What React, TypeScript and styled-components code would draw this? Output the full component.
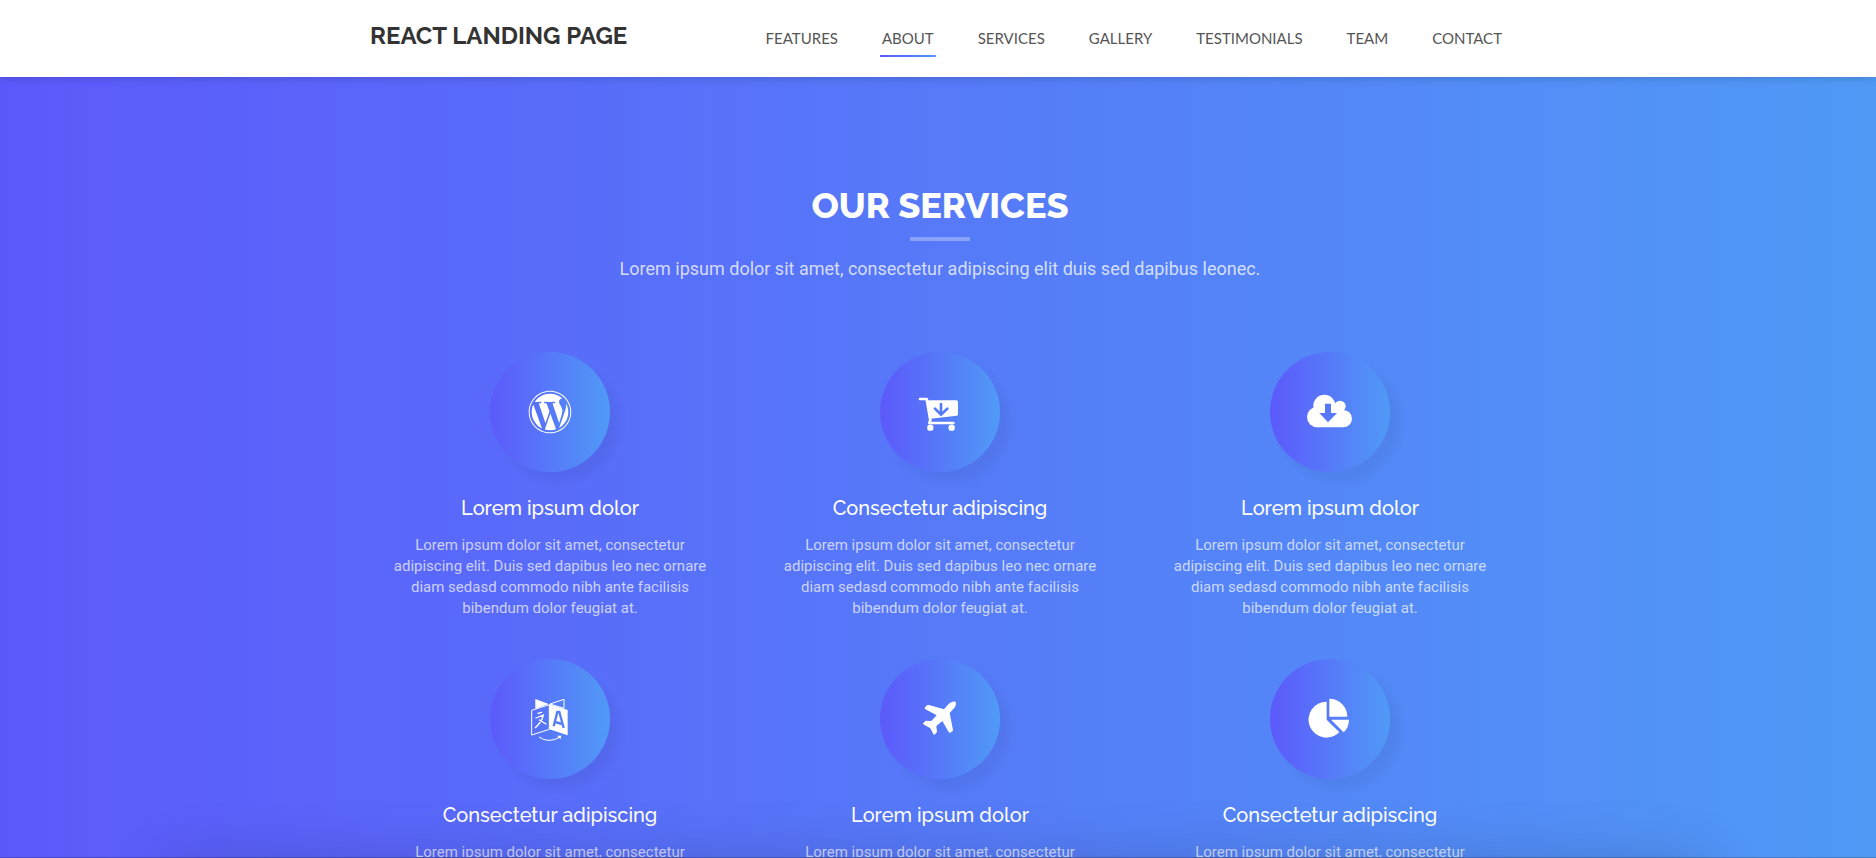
import React from "react";
import styled, { createGlobalStyle } from "styled-components";
import { FaWordpress } from "react-icons/fa";

const GRADIENT = "linear-gradient(to right, #5c59fb 0%, #509af6 100%)";
const HEADING = '"Raleway", "Lato", sans-serif';

const GlobalStyle = createGlobalStyle`
  *, *::before, *::after { box-sizing: border-box; }
  body {
    margin: 0;
    font-family: "Roboto", "Inter", sans-serif;
    font-size: 15px;
    line-height: 21px;
    color: #777;
  }
`;

const Page = styled.div`
  display: flex;
  flex-direction: column;
  height: 100vh;
  overflow: hidden;
`;

const Header = styled.header`
  position: relative;
  z-index: 1;
  padding-left: 4px;
  background: #fff;
  box-shadow: 0 0 10px rgba(0, 0, 0, 0.2);
`;

const Container = styled.div`
  max-width: 1170px;
  margin: 0 auto;
`;

const Bar = styled(Container)`
  display: flex;
  justify-content: space-between;
  align-items: flex-start;
  height: 77px;
  padding: 20px 21px 0 15px;
`;

const Brand = styled.a`
  font-family: ${HEADING};
  font-size: 24px;
  line-height: 32px;
  font-weight: 700;
  color: #333;
  text-decoration: none;
  text-transform: uppercase;
  white-space: nowrap;
`;

const Nav = styled.nav`
  display: flex;
  gap: 40px;
`;

const NavLink = styled.a<{ $active?: boolean }>`
  padding: 8px 2px;
  font-family: "Lato", sans-serif;
  font-size: 15px;
  color: #555;
  text-decoration: none;
  text-transform: uppercase;
  background: ${(p) => (p.$active ? GRADIENT : "none")} bottom / 100% 2px no-repeat;
`;

const Services = styled.main`
  flex: 1;
  min-height: 0;
  padding: 100px 0 100px 4px;
  overflow-y: auto;
  scrollbar-width: none;
  text-align: center;
  color: #fff;
  background: ${GRADIENT};
  border-bottom: 1px solid rgba(0, 0, 0, 0.2);
`;

const SectionTitle = styled.div`
  margin-bottom: 70px;
`;

const Title = styled.h2`
  margin: 0;
  padding-bottom: 15px;
  font-family: ${HEADING};
  font-size: 36px;
  line-height: 56px;
  font-weight: 800;
  text-transform: uppercase;

  &::after {
    content: "";
    display: block;
    width: 60px;
    height: 4px;
    margin: 4px auto 0;
    background: rgba(255, 255, 255, 0.3);
  }
`;

const Lead = styled.p`
  margin: 0;
  font-size: 18px;
  line-height: 26px;
  color: rgba(255, 255, 255, 0.75);
`;

const Grid = styled.div`
  display: grid;
  grid-template-columns: repeat(3, 1fr);
`;

const Service = styled.article`
  padding: 0 25px;
`;

const IconCircle = styled.div`
  display: flex;
  align-items: center;
  justify-content: center;
  width: 120px;
  height: 120px;
  margin: 0 auto;
  border-radius: 50%;
  background: ${GRADIENT};
  box-shadow: 10px 10px 10px rgba(0, 0, 0, 0.05);
`;

const ServiceTitle = styled.h3`
  margin: 24px 0 15px;
  font-family: ${HEADING};
  font-size: 20px;
  line-height: 24px;
  font-weight: 500;
`;

const Description = styled.p`
  margin: 0 0 40px;
  color: rgba(255, 255, 255, 0.7);
`;

const WindowShade = styled.div`
  position: fixed;
  left: 9%;
  right: 9%;
  top: 100%;
  height: 60px;
  box-shadow: 0 0 60px rgba(0, 0, 0, 0.15);
`;

const Glyph = styled.svg.attrs({ viewBox: "0 0 144 144", "aria-hidden": true })`
  width: 48px;
  height: 48px;
  fill: #fff;
`;

const CartIcon = () => (
  <Glyph>
    <mask id="cart-arrow">
      <rect width="144" height="144" fill="#fff" />
      <path d="M75 48v31M57 62l18 18 19-18" fill="none" stroke="#000" strokeWidth="8" strokeLinecap="round" />
    </mask>
    <path d="M33 37h88q5 0 5 5v37q0 4-4 4.500L44 92z" mask="url(#cart-arrow)" />
    <path d="M12 33h20l11 64-3 8h72" fill="none" stroke="#fff" strokeWidth="8" strokeLinecap="round" strokeLinejoin="round" />
    <circle cx="43" cy="119" r="9.500" />
    <circle cx="107" cy="119" r="9.500" />
  </Glyph>
);

const CloudIcon = () => (
  <Glyph>
    <mask id="cloud-arrow">
      <rect width="144" height="144" fill="#fff" />
      <path d="M57 47h18v28h18L66 103 40 75h17z" fill="#000" />
    </mask>
    <g mask="url(#cloud-arrow)">
      <circle cx="55" cy="53" r="33" />
      <circle cx="34" cy="87" r="31" />
      <circle cx="112" cy="92" r="26" />
      <circle cx="102" cy="55" r="17" />
      <path d="M34 55h78v63H34z" />
    </g>
  </Glyph>
);

const LanguageIcon = () => (
  <Glyph>
    <mask id="letter-a">
      <rect width="144" height="144" fill="#fff" />
      <path d="M83 94l11-43h6l13 48M87 81l22 6" fill="none" stroke="#000" strokeWidth="7" />
    </mask>
    <path d="M28 12l40 15-40 14z" />
    <path d="M72 27l42-14v27L72 27" fill="none" stroke="#fff" strokeWidth="3" />
    <path d="M17 46l53-17v74l-53 17z" fill="none" stroke="#fff" strokeWidth="3" />
    <path d="M70 28l55 17v76l-55-18z" mask="url(#letter-a)" />
    <path
      d="M36 55l11-3M30 69l22-9q-4 20-24 38M40 75l20 12"
      fill="none"
      stroke="#fff"
      strokeWidth="4"
      strokeLinecap="round"
    />
    <path d="M39 126q29 20 61 1" fill="none" stroke="#fff" strokeWidth="3" />
    <path d="M94 122h12l-3 11z" />
  </Glyph>
);

const PlaneIcon = () => (
  <Glyph>
    <path d="M119 21c3 7-1 15-7 21l-11 12 10 51q0 2-2 4l-6 4q-3 1-5-2L79 78 61 93l2 18-7 8q-2 1-4-2l-9-17-21-12q-2-2 0-4l7-7 17 1 16-17-35-19q-2-2 0-5l6-6q3-2 6-1l45 13 14-16c7-6 16-9 21-6z" />
  </Glyph>
);

const PieIcon = () => (
  <Glyph>
    <path d="M62 20v54l38 38A54 54 0 1 1 62 20z" />
    <path d="M70 11a54 54 0 0 1 54 54H70z" />
    <path d="M75 74h54a54 54 0 0 1-16 38z" />
  </Glyph>
);

const LINKS = ["Features", "About", "Services", "Gallery", "Testimonials", "Team", "Contact"];

const TEXT =
  "Lorem ipsum dolor sit amet, consectetur adipiscing elit. Duis sed dapibus leo nec ornare diam sedasd commodo nibh ante facilisis bibendum dolor feugiat at.";

const SERVICES = [
  { name: "Lorem ipsum dolor", icon: <FaWordpress size={44} color="#fff" /> },
  { name: "Consectetur adipiscing", icon: <CartIcon /> },
  { name: "Lorem ipsum dolor", icon: <CloudIcon /> },
  { name: "Consectetur adipiscing", icon: <LanguageIcon /> },
  { name: "Lorem ipsum dolor", icon: <PlaneIcon /> },
  { name: "Consectetur adipiscing", icon: <PieIcon /> },
];

export default function App() {
  return (
    <Page>
      <GlobalStyle />
      <Header>
        <Bar>
          <Brand href="#page-top">React Landing Page</Brand>
          <Nav>
            {LINKS.map((label) => (
              <NavLink key={label} href={`#${label.toLowerCase()}`} $active={label === "About"}>
                {label}
              </NavLink>
            ))}
          </Nav>
        </Bar>
      </Header>
      <Services id="services">
        <Container>
          <SectionTitle>
            <Title>Our Services</Title>
            <Lead>Lorem ipsum dolor sit amet, consectetur adipiscing elit duis sed dapibus leonec.</Lead>
          </SectionTitle>
          <Grid>
            {SERVICES.map((service, i) => (
              <Service key={i}>
                <IconCircle>{service.icon}</IconCircle>
                <ServiceTitle>{service.name}</ServiceTitle>
                <Description>{TEXT}</Description>
              </Service>
            ))}
          </Grid>
        </Container>
      </Services>
      <WindowShade />
    </Page>
  );
}
